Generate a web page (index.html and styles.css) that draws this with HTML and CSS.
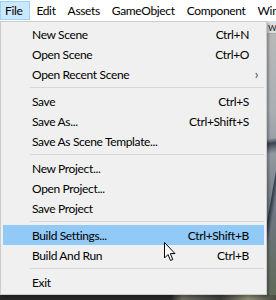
FILE: index.html
```html
<!DOCTYPE html>
<html lang="en">

<head>
    <meta charset="UTF-8">
    <meta name="viewport" content="width=device-width, initial-scale=1.0">
    <title>File Menu</title>
    <link rel="stylesheet" href="styles.css">
</head>

<body>
    <!-- Top menu bar -->
    <nav class="menubar">
        <span class="menubar-item active">File</span>
        <span class="menubar-item">Edit</span>
        <span class="menubar-item">Assets</span>
        <span class="menubar-item">GameObject</span>
        <span class="menubar-item">Component</span>
        <span class="menubar-item">Window</span>
    </nav>

    <!-- Editor area behind the dropdown -->
    <div class="workspace">
        <div class="scene">
            <div class="scene-tab">wo</div>
            <div class="scene-view"></div>
        </div>
        <div class="scene-bottom"></div>

        <!-- File dropdown -->
        <ul class="dropdown">
            <li class="item"><span>New Scene</span><span class="shortcut">Ctrl+N</span></li>
            <li class="item"><span>Open Scene</span><span class="shortcut">Ctrl+O</span></li>
            <li class="item"><span>Open Recent Scene</span><span class="arrow">&#8250;</span></li>
            <li class="separator"></li>
            <li class="item"><span>Save</span><span class="shortcut">Ctrl+S</span></li>
            <li class="item"><span>Save As...</span><span class="shortcut">Ctrl+Shift+S</span></li>
            <li class="item"><span>Save As Scene Template...</span></li>
            <li class="separator"></li>
            <li class="item"><span>New Project...</span></li>
            <li class="item"><span>Open Project...</span></li>
            <li class="item"><span>Save Project</span></li>
            <li class="separator"></li>
            <li class="item hover"><span>Build Settings...</span><span class="shortcut">Ctrl+Shift+B</span></li>
            <li class="item"><span>Build And Run</span><span class="shortcut">Ctrl+B</span></li>
            <li class="separator"></li>
            <li class="item"><span>Exit</span></li>
        </ul>

        <!-- Mouse pointer -->
        <svg class="cursor" width="13" height="20" viewBox="0 0 13 20">
            <path d="M0.5 0.5 L0.5 16 L4 12.5 L6.5 18.5 L8.8 17.5 L6.3 11.6 L11 11.6 Z" fill="#fff" stroke="#000" stroke-width="1" stroke-linejoin="round"/>
        </svg>
    </div>
</body>

</html>
```

FILE: styles.css
```css
body {
    font-family: 'Lato', 'Noto Sans', sans-serif;
    font-size: 12px;
    letter-spacing: -0.35px;
    color: #000;
    margin: 0;
    width: 276px;
    height: 300px;
    overflow: hidden;
    background-color: #fff;
}

.menubar {
    display: flex;
    height: 21px;
    padding-top: 1px;
    box-sizing: border-box;
    background-color: #fff;
    white-space: nowrap;
    overflow: hidden;
}

.menubar-item {
    height: 19px;
    line-height: 18px;
    padding: 0 5px;
    border: 1px solid transparent;
    box-sizing: border-box;
}

.menubar-item:first-child {
    padding-left: 4px;
    padding-right: 7px;
}

.menubar-item.active {
    background-color: #cce8ff;
    border-color: #99d1ff;
}

.workspace {
    position: relative;
    height: 279px;
}

.scene {
    display: flex;
    flex-direction: column;
    margin-left: 266px;
    height: 274px;
    overflow: hidden;
}

.scene-tab {
    height: 12px;
    padding-left: 2px;
    background-color: #dedede;
    border-bottom: 1px solid #aaa;
    font-size: 11px;
    line-height: 12px;
    color: #333;
}

.scene-view {
    flex: 1;
    background:
        linear-gradient(170deg, transparent 40%, rgba(20, 30, 45, 0.7) 42%, transparent 46%),
        linear-gradient(100deg, transparent 60%, rgba(30, 40, 60, 0.8) 62%, transparent 70%),
        linear-gradient(#b7b9b8 0%, #a9aeb3 30%, #8c9399 50%, #6d7680 70%, #5f6a57 100%);
}

.scene-bottom {
    height: 5px;
    background: linear-gradient(90deg, #262626 0%, #262626 62%, #6b6b60 66%, #3b3b38 80%, #8a8a70 90%, #4a4a42 100%);
}

.dropdown {
    position: absolute;
    top: 0;
    left: 0;
    width: 267px;
    margin: 0;
    padding: 2px 2px;
    list-style: none;
    box-sizing: border-box;
    background-color: #f0f0f0;
    border: 1px solid #cccccc;
    box-shadow: 2px 2px 2px rgba(0, 0, 0, 0.25);
}

.item {
    display: flex;
    justify-content: space-between;
    align-items: center;
    height: 20px;
    padding: 0 15px 0 29px;
    white-space: nowrap;
}

.item.hover {
    background-color: #91c9f7;
}

.shortcut {
    margin-left: 20px;
}

.arrow {
    font-size: 13px;
    color: #444;
    margin-right: -9px;
}

.separator {
    height: 7px;
    margin-left: 27px;
    background: linear-gradient(#d7d7d7, #d7d7d7) no-repeat 0 3px / 100% 1px;
}

.cursor {
    position: absolute;
    left: 164px;
    top: 221px;
}
```
